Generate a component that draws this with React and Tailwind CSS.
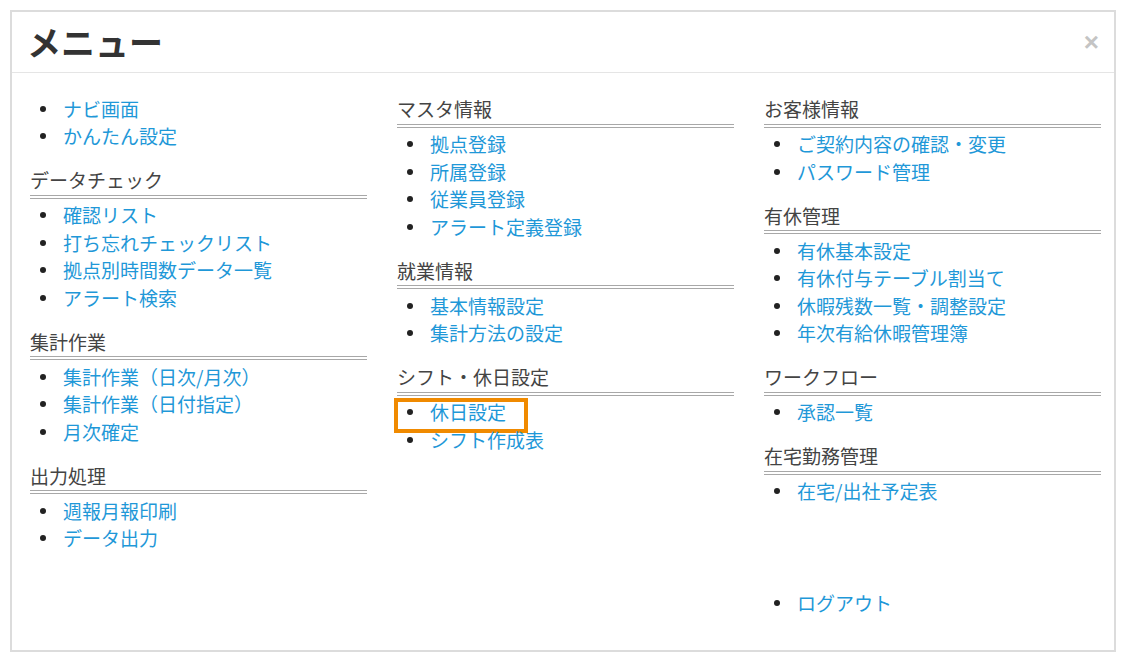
import React from 'react'

const columns = [
  [
    { items: ['ナビ画面', 'かんたん設定'] },
    { title: 'データチェック', items: ['確認リスト', '打ち忘れチェックリスト', '拠点別時間数データ一覧', 'アラート検索'] },
    { title: '集計作業', items: ['集計作業（日次/月次）', '集計作業（日付指定）', '月次確定'] },
    { title: '出力処理', items: ['週報月報印刷', 'データ出力'] },
  ],
  [
    { title: 'マスタ情報', items: ['拠点登録', '所属登録', '従業員登録', 'アラート定義登録'] },
    { title: '就業情報', items: ['基本情報設定', '集計方法の設定'] },
    { title: 'シフト・休日設定', items: ['休日設定', 'シフト作成表'], highlight: '休日設定' },
  ],
  [
    { title: 'お客様情報', items: ['ご契約内容の確認・変更', 'パスワード管理'] },
    { title: '有休管理', items: ['有休基本設定', '有休付与テーブル割当て', '休暇残数一覧・調整設定', '年次有給休暇管理簿'] },
    { title: 'ワークフロー', items: ['承認一覧'] },
    { title: '在宅勤務管理', items: ['在宅/出社予定表'] },
  ],
]

const Item = ({ label, highlight }) => (
  <li className="relative flex items-center h-[27.5px]">
    <span className="w-[6px] h-[6px] rounded-full bg-[#222] ml-[10px] mr-[17px]"></span>
    <a href="#" className="text-[#1f98d8]">{label}</a>
    {highlight && (
      <span className="absolute left-[-3px] top-[-1px] w-[134px] h-[35px] border-4 border-[#f08a00]"></span>
    )}
  </li>
)

const Section = ({ title, items, highlight }) => (
  <div className="mb-[16px]">
    {title && (
      <h3 className="text-[#444] leading-[27.5px] pb-[1px] border-b-4 border-double border-[#a8a8a8] mb-[3px]">{title}</h3>
    )}
    <ul>
      {items.map((it) => (
        <Item key={it} label={it} highlight={it === highlight} />
      ))}
    </ul>
  </div>
)

export default function App() {
  return (
    <div className="w-[1121px] h-[660px] bg-white pt-[10px] pl-[10px]" style={{ fontFamily: '"Noto Sans CJK JP", "Noto Sans", sans-serif' }}>
      <div className="w-[1106px] h-[642px] border-2 border-[#dcdcdc] flex flex-col">
        <div className="h-[61px] border-b border-[#e5e5e5] flex items-center justify-between pl-[15px] pr-[15px]">
          <h1 className="text-[34px] font-bold text-[#333] leading-none">メニュー</h1>
          <span className="text-[#c4c4c4] text-[26px] font-bold leading-none" style={{ fontFamily: '"Liberation Sans", sans-serif' }}>×</span>
        </div>
        <div className="flex-1 flex gap-[30px] pl-[18px] pt-[22px] text-[19px]">
          {columns.map((col, i) => (
            <div key={i} className="w-[337px] flex flex-col">
              {col.map((s, j) => (
                <Section key={j} {...s} />
              ))}
              {i === 2 && (
                <ul className="mt-[68px]">
                  <Item label="ログアウト" />
                </ul>
              )}
            </div>
          ))}
        </div>
      </div>
    </div>
  )
}
